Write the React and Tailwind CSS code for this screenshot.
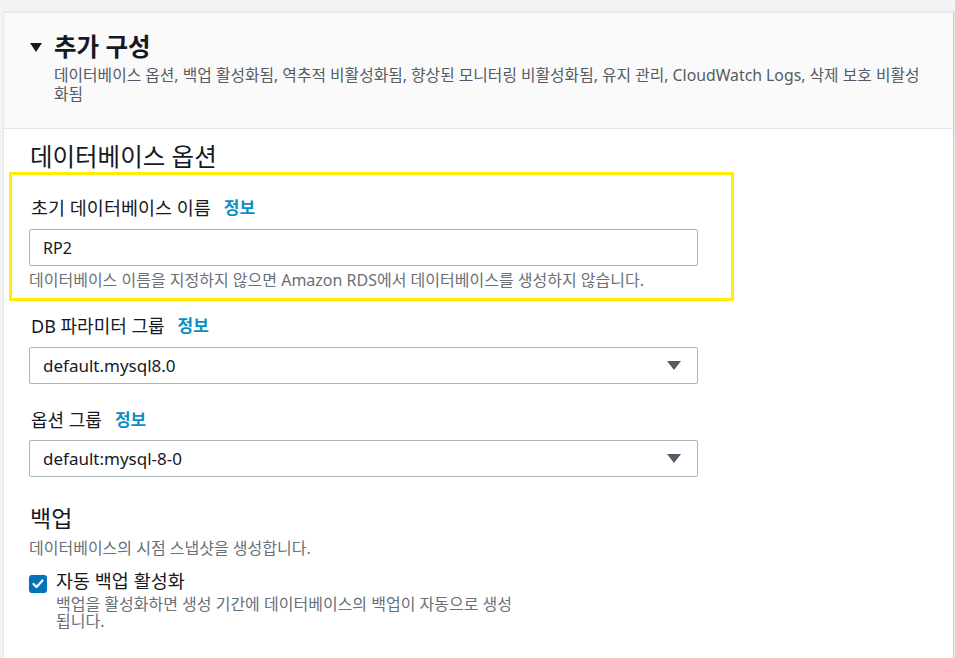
import React from "react";

const font = { fontFamily: '"Noto Sans", "Noto Sans CJK KR", sans-serif' };

const InfoLink = () => (
  <span className="ml-[13px] text-[17px] font-bold text-[#0a8fc4]">정보</span>
);

const Caret = () => (
  <svg width="14" height="9" viewBox="0 0 14 9" className="shrink-0">
    <path d="M0 0 H14 L7 9 Z" fill="#545b64" />
  </svg>
);

const SelectBox = ({ value }) => (
  <div className="flex h-[37px] w-[669px] items-center justify-between rounded-[2px] border border-[#aab7b8] bg-white pl-[13px] pr-[16px]">
    <span className="text-[17px] text-[#16191f]">{value}</span>
    <Caret />
  </div>
);

export default function App() {
  return (
    <div className="min-h-[658px] w-full bg-[#f2f3f3] pt-[12px] pl-[3px] pr-[2px]" style={font}>
      <div className="min-h-[646px] border-l border-t border-[#e4e7e7] bg-white shadow-[1px_0_1px_#c6cccc]">
        {/* header */}
        <div className="border-b border-[#e4e7e7] bg-[#fafafa] pt-[19px] pb-[24px] pl-[26px] pr-[23px]">
          <div className="flex items-center">
            <svg width="12" height="9" viewBox="0 0 12 9" className="mr-[12px]">
              <path d="M0 0 H12 L6 9 Z" fill="#16191f" />
            </svg>
            <h2 className="text-[24.5px] font-bold leading-[30px] text-[#16191f]">추가 구성</h2>
          </div>
          <p className="mt-[4px] pl-[24px] text-[15.8px] leading-[19px] text-[#545b64]">
            데이터베이스 옵션, 백업 활성화됨, 역추적 비활성화됨, 향상된 모니터링 비활성화됨, 유지 관리, CloudWatch Logs, 삭제 보호 비활성화됨
          </p>
        </div>

        {/* body */}
        <div className="pt-[14px] pb-[20px]">
          <h3 className="pl-[26px] text-[24.5px] leading-[28px] text-[#16191f]">데이터베이스 옵션</h3>

          <div className="mt-[1px] ml-[5px] w-[725px] border-[3px] border-[#ffee00] pt-[22px] pb-[8px] pl-[17px]">
            <div className="flex items-center text-[18.5px] leading-[22px] text-[#16191f]">
              <span className="pl-[2px]">초기 데이터베이스 이름</span>
              <InfoLink />
            </div>
            <div className="mt-[10px] flex h-[37px] w-[669px] items-center rounded-[2px] border border-[#aab7b8] bg-white pl-[13px] text-[16px] text-[#16191f]">
              RP2
            </div>
            <p className="mt-[4px] text-[16px] leading-[20px] text-[#687078]">
              데이터베이스 이름을 지정하지 않으면 Amazon RDS에서 데이터베이스를 생성하지 않습니다.
            </p>
          </div>

          <div className="pl-[25px]">
            <div className="mt-[14px] flex items-center text-[18px] leading-[22px] text-[#16191f]">
              <span className="pl-[2px]">DB 파라미터 그룹</span>
              <InfoLink />
            </div>
            <div className="mt-[10px]">
              <SelectBox value="default.mysql8.0" />
            </div>

            <div className="mt-[25px] flex items-center text-[18px] leading-[22px] text-[#16191f]">
              <span className="pl-[2px]">옵션 그룹</span>
              <InfoLink />
            </div>
            <div className="mt-[9px]">
              <SelectBox value="default:mysql-8-0" />
            </div>

            <h3 className="mt-[27px] pl-[1px] text-[23px] leading-[28px] text-[#16191f]">백업</h3>
            <p className="mt-[6px] text-[16px] leading-[20px] text-[#687078]">
              데이터베이스의 시점 스냅샷을 생성합니다.
            </p>

            <div className="mt-[12px] flex items-start">
              <div className="mt-[5px] flex h-[18px] w-[18px] items-center justify-center rounded-[3px] bg-[#0073bb]">
                <svg width="12" height="10" viewBox="0 0 12 10">
                  <path d="M1.5 5 L4.5 8 L10.5 1.5" stroke="#fff" strokeWidth="2.2" fill="none" strokeLinecap="round" strokeLinejoin="round" />
                </svg>
              </div>
              <div className="ml-[9px]">
                <div className="text-[18.5px] leading-[22px] text-[#16191f]">자동 백업 활성화</div>
                <p className="mt-[4px] w-[480px] break-keep text-[16px] leading-[17px] text-[#687078]">
                  백업을 활성화하면 생성 기간에 데이터베이스의 백업이 자동으로 생성 됩니다.
                </p>
              </div>
            </div>
          </div>
        </div>
      </div>
    </div>
  );
}
